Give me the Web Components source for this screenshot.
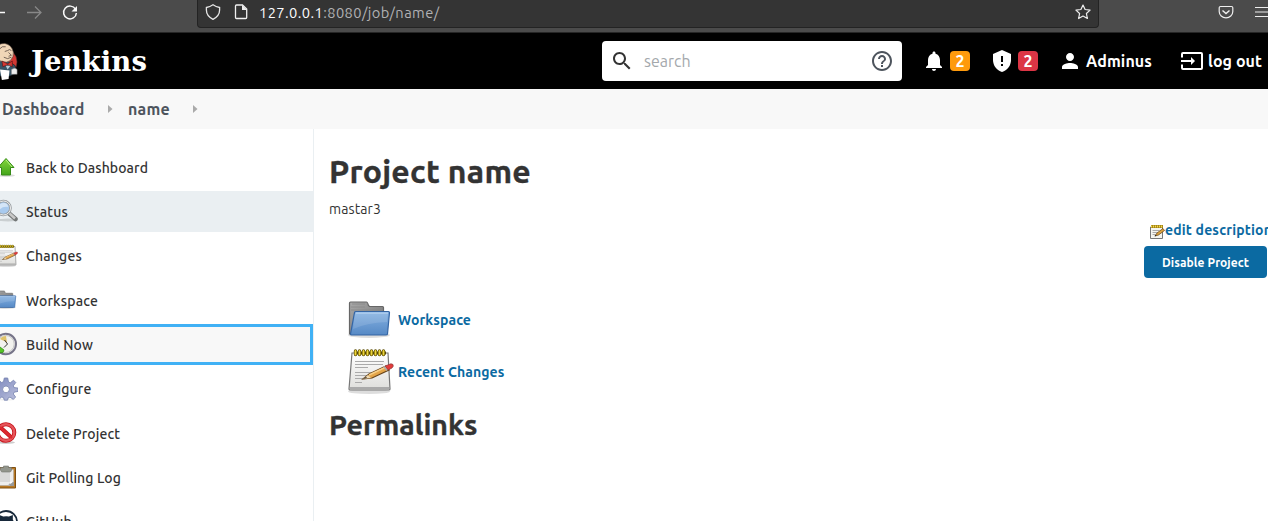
<!DOCTYPE html>
<html lang="en"><head><meta charset="utf-8"><title>name [Jenkins]</title>
<style>
html,body{margin:0;width:100%;height:100%;overflow:hidden;background:#fff;font-family:"Ubuntu","Noto Sans","Open Sans",sans-serif;color:#333}
</style></head><body>
<jenkins-page></jenkins-page>
<script>
const define=(name,html,setup)=>customElements.define(name,class extends HTMLElement{
  connectedCallback(){
    if(this.shadowRoot)return;
    const t=document.createElement('template');t.innerHTML=html;
    this.attachShadow({mode:'open'}).append(t.content.cloneNode(true));
    if(setup)setup(this,this.shadowRoot);
  }
});

const notepad=`<defs><linearGradient id="p" x2="0" y2="1"><stop stop-color="#fff"/><stop offset="1" stop-color="#dededb"/></linearGradient></defs>
<ellipse cx="23" cy="43.500" rx="21" ry="2.5" fill="#0002"/>
<path d="M6 5h36l2 36q0 1-1 1H4q-1 0-1-1z" fill="url(#p)" stroke="#777" stroke-width="1.2"/>
<path d="M4 39h39v2H4z" fill="#aaa"/>
<path d="M9 13.500h29M9 16.500h28M9 19.500h13M9 24.500h21M9 27.500h14M9 30.500h9M9 34.500h7" stroke="#aaa" stroke-width="1"/>
<path d="M8 5h32" stroke="#544600" stroke-width="3"/>
<path d="M9.500 3v3.500M13.500 3v3.500M17.500 3v3.500M21.500 3v3.500M25.500 3v3.500M29.500 3v3.500M33.500 3v3.500M37.500 3v3.500" stroke="#5c4c00" stroke-width="3.400" stroke-linecap="round"/>
<path d="M9.500 3v3.500M13.500 3v3.500M17.500 3v3.500M21.500 3v3.500M25.500 3v3.500M29.500 3v3.500M33.500 3v3.500M37.500 3v3.500" stroke="#edd437" stroke-width="1.900" stroke-linecap="round"/>
<path d="M17 31l6-5 17-8 3 4-17 8z" fill="#e4a548" stroke="#68441a" stroke-width="1.200"/><path d="M23 27l17-8" stroke="#f8cf86" stroke-width="1.500"/>
<path d="M17 31l5-4 3 3z" fill="#efd9b0"/><path d="M17 31l3-2 1 1z" fill="#222"/>
<path d="M39 18l3 4 4-2q2-2 1-3.500-2-1.500-4 0z" fill="#e33b3b" stroke="#8d3a3a" stroke-width=".7"/><path d="M38 18.500l3 4" stroke="#aaa" stroke-width="1.500"/>`;
const folder=`<defs><linearGradient id="b" x2="0" y2="1"><stop stop-color="#86b2e2"/><stop offset="1" stop-color="#5689c5"/></linearGradient><linearGradient id="g" x2="1" y2="1"><stop stop-color="#aaa"/><stop offset="1" stop-color="#6d6d6d"/></linearGradient></defs>
<ellipse cx="23" cy="39" rx="21" ry="3" fill="#0002"/>
<path d="M3.500 38V7q0-1 1-1h16q1 0 2 3.500l1 1h13q1 0 1 1v27z" fill="url(#g)" stroke="#666" stroke-width="1.200"/>
<path d="M6 8h13M5 11h14M5 14h28" stroke="#888" stroke-width=".8"/>
<path d="M8.500 16.500q0-1 1-1h33q1 0 1 1l-2 21.500q0 1-2 1H5.500q-1 0-1-1z" fill="url(#b)" stroke="#3465a4" stroke-width="1.200"/>
<path d="M10 17h32" stroke="#b9d5f4"/><path d="M9 17h33l-1 9Q20 27 7 33z" fill="#fff" opacity=".12"/>`;
const icons={
notepad:[48,notepad],folder:[48,folder],
smallnote:[16,`<path d="M1.500 3h12v11.500h-12z" fill="#f5f5ef" stroke="#777"/><path d="M2 2.500h12" stroke="#9b7a12" stroke-width="3"/><path d="M2 2.500h12" stroke="#f6dc4b" stroke-width="2" stroke-dasharray="1.200 .8"/><path d="M3.500 6.500h7M3.500 8.500h5M3.500 10.500h3" stroke="#aaa"/><path d="M6 12l2-3 6-4.500 1.500 2-6 4.500z" fill="#dda23e" stroke="#5f4015" stroke-width=".7"/><path d="M5.500 12.500l2-.7-1-1z" fill="#222"/>`],
up:[24,`<defs><linearGradient id="u" x2="0" y2="1"><stop stop-color="#83d63b"/><stop offset="1" stop-color="#43a51a"/></linearGradient></defs><ellipse cx="12" cy="20.500" rx="9" ry="1.500" fill="#0002"/><path d="M12 3.500l8 9h-3.500v7.500h-9v-7.500H4z" fill="url(#u)" stroke="#368b16"/><path d="M12 5l6 7" stroke="#baf487" fill="none"/>`],
magnifier:[24,`<ellipse cx="14" cy="21" rx="10" ry="1.500" fill="#0002"/><path d="M14.500 14l7 6" stroke="#747777" stroke-width="4.500" stroke-linecap="round"/><path d="M15 14l6 5.500" stroke="#c8c8c8" stroke-width="2.500"/><circle cx="9.500" cy="9" r="7" fill="#a9caee" stroke="#969b9e" stroke-width="2.600"/><circle cx="9.500" cy="9" r="7" fill="none" stroke="#eee"/><path d="M4.500 9Q5 4 10 4q4 0 4 4Q8 7 4.500 12z" fill="#fff" opacity=".5"/>`],
clock:[24,`<circle cx="11.700" cy="12" r="10.300" fill="#eeeef1" stroke="#767488" stroke-width="2"/><circle cx="11.700" cy="12" r="8.500" fill="#f2f2ee" stroke="#bbb" stroke-width=".8"/><path d="M13 10.500L6 7q2-3 6-3z" fill="#dfc36b"/><path d="M10.500 8l3 4-3.500 3.500" fill="none" stroke="#333" stroke-width="1"/><path d="M2 14l4 1 4 3-1 2.500-7 .5z" fill="#55c427" stroke="#29880d" stroke-width=".7"/>`],
gear:[24,`<defs><linearGradient id="m" x2="1" y2="1"><stop stop-color="#7b87bd"/><stop offset="1" stop-color="#bcc0dc"/></linearGradient></defs><ellipse cx="12" cy="22.500" rx="9" ry="1" fill="#0001"/><path fill="url(#m)" stroke="#7480ad" stroke-width=".8" fill-rule="evenodd" d="M10.300 1h3.400l.8 4 1.800.8 3.200-2.600 2.300 2.300-2.500 3.300.8 1.800 3.900.5v3.300l-3.900.8-.8 1.800 2.300 3-2.300 2.400-3.300-2.300-1.800.8-.7 2.300h-3.200l-.8-2.500-1.700-.7-3.200 2.400L2 19.900l2.300-3.200-.8-1.700-3.500-.7V11l3.700-.6.8-1.800L2.200 5.400l2.300-2.300 3.100 2.400 1.900-.8zM12 9a3.400 3.400 0 1 0 0 6.800A3.400 3.400 0 1 0 12 9z"/>`],
forbid:[24,`<ellipse cx="12" cy="21.500" rx="9" ry="1.500" fill="#0003"/><circle cx="12" cy="11.500" r="8.300" fill="#fff" stroke="#c61018" stroke-width="4"/><path d="M6 6l12 11" stroke="#c61018" stroke-width="4"/><circle cx="12" cy="11.500" r="8.300" fill="none" stroke="#e5555a" stroke-width="2.400"/><path d="M6 6l12 11" stroke="#dc2930" stroke-width="2.500"/>`],
clipboard:[24,`<path d="M1 2.500h20.500V23H1z" fill="#b87924" stroke="#805013"/><path d="M3.500 4.500h16v16h-16z" fill="#eee" stroke="#aaa" stroke-width=".5"/><path d="M6 7h10v10H6z" fill="#d9d9d9"/><path d="M14 21q1-3 6-5v5z" fill="#999"/><path d="M14 21q3-1 2-4l4-1z" fill="#fff"/><path d="M6.500 5V2.500h3V1h5v1.500h3V5q0 2-2 2h-7q-2 0-2-2z" fill="#92958c" stroke="#73766e" stroke-width=".6"/>`],
github:[24,`<circle cx="12" cy="12" r="11" fill="#fff" stroke="#17283a" stroke-width="1.800"/><path d="M5.500 9.500L5.300 5l4 1.500q3-.6 5.600 0l4-1.500-.1 4.500q3 5-2 7.500l-2 .6V23h-6v-5Q3 16 5.500 9.500z" fill="#17283a"/>`],
back:[16,`<path d="M15 7.500H1M7 1.500l-6 6 6 6" fill="none" stroke="#fafafa" stroke-width="1.300"/>`],
forward:[16,`<path d="M1 7.500h14M9 1.500l6 6-6 6" fill="none" stroke="#888" stroke-width="1.300"/>`],
reload:[16,`<path d="M13.500 4.200A6.400 6.400 0 1 0 14.400 8" fill="none" stroke="#fafafa" stroke-width="1.500"/><path d="M15 1v5.500H9.500z" fill="#fafafa"/>`],
shield:[16,`<path d="M8 .8Q11 3 14.600 3.500V6q0 6-6.600 9.300Q1.400 12 1.400 6V3.500Q5 3 8 .8z" fill="none" stroke="#e6e6e6" stroke-width="1.300"/>`],
doc:[16,`<path d="M3.500 1h6L13.700 5v8.500q0 1-1 1h-9.200q-1 0-1-1V2q0-1 1-1z" fill="none" stroke="#f0f0f0" stroke-width="1.300"/><path d="M9 1v5h5z" fill="#eee"/>`],
star:[16,`<path d="M8 1l2.100 4.500 5 .6-3.700 3.400 1 5L8 12l-4.400 2.500 1-5L.9 6.100l5-.6z" fill="none" stroke="#eee" stroke-width="1.200" stroke-linejoin="round"/>`],
pocket:[16,`<path d="M2.500 2.500h11q1.300 0 1.300 1.300V7.500a6.800 6.300 0 0 1-13.600 0V3.800q0-1.300 1.300-1.300z" fill="none" stroke="#eee" stroke-width="1.200"/><path d="M4.500 6.500L8 9.500l3.500-3" fill="none" stroke="#eee" stroke-width="1.500"/>`],
menu:[16,`<path d="M1 3.500h14M1 8h14M1 12.500h14" stroke="#eee" stroke-width="1.200"/>`],
search:[24,`<path fill="#333" d="M15.500 14h-.79l-.28-.27C15.410 12.590 16 11.110 16 9.500 16 5.910 13.090 3 9.500 3S3 5.910 3 9.500 5.910 16 9.500 16c1.610 0 3.090-.59 4.230-1.570l.27.28v.79l5 4.990L20.490 19l-4.990-5zm-6 0C7.010 14 5 11.990 5 9.500S7.010 5 9.500 5 14 7.010 14 9.500 11.990 14 9.500 14z"/>`],
help:[24,`<path fill="#4d545d" d="M11 18h2v-2h-2v2zm1-16C6.480 2 2 6.480 2 12s4.480 10 10 10 10-4.480 10-10S17.520 2 12 2zm0 18c-4.410 0-8-3.590-8-8s3.590-8 8-8 8 3.590 8 8-3.590 8-8 8zm0-14c-2.210 0-4 1.790-4 4h2c0-1.100.9-2 2-2s2 .9 2 2c0 2-3 1.750-3 5h2c0-2.250 3-2.500 3-5 0-2.210-1.790-4-4-4z"/>`],
bell:[24,`<path fill="#fff" d="M12 22c1.100 0 2-.9 2-2h-4c0 1.100.9 2 2 2zm6-6v-5c0-3.070-1.630-5.640-4.500-6.320V4c0-.83-.67-1.500-1.500-1.500s-1.500.67-1.500 1.500v.68C7.640 5.360 6 7.920 6 11v5l-2 2v1h16v-1l-2-2z"/>`],
warn:[24,`<path fill="#fff" d="M12 1L3 5v6c0 5.550 3.840 10.740 9 12 5.160-1.260 9-6.450 9-12V5z"/><path d="M11 7h2v6h-2zM11 15h2v2h-2z" fill="#000"/>`],
person:[24,`<path fill="#fff" d="M12 12c2.210 0 4-1.790 4-4s-1.790-4-4-4-4 1.790-4 4 1.790 4 4 4zm0 2c-2.670 0-8 1.340-8 4v2h16v-2c0-2.660-5.330-4-8-4z"/>`],
exit:[24,`<path fill="none" stroke="#fff" stroke-width="2" d="M2 8.500V5q0-1 1-1h18q1 0 1 1v14q0 1-1 1H3q-1 0-1-1v-3.500"/><path d="M1 12h13" stroke="#fff" stroke-width="2"/><path d="M11 8l4 4-4 4z" fill="#fff"/>`],
arrow:[8,`<path d="M2 0l4.500 4L2 8z" fill="#aaa"/>`],
butler:[40,`<circle cx="23.500" cy="21" r="14.500" fill="#d33833" stroke="#222" stroke-width=".6"/><path d="M10 19q12-2 22 3l4 3 1 8-7 3H10z" fill="#375466" stroke="#111" stroke-width=".6"/><path d="M25 1.500q-8 0-11 6-1 11 8 13 5 2 9-1 4-4 3-9-2-8-9-9z" fill="#f0d6b7" stroke="#5b4b42" stroke-width=".7"/><path d="M20 7q2-3 6-2M28 9q2-2 4 0M25 10l3-1M29 11l3 3-3 1M24 16q4 3 8 0M17 9q-2 2 0 5" fill="none" stroke="#4f413a" stroke-width=".8"/><path d="M22 20l6 3 5-3v6l-5-2-5 2z" fill="#d33833" stroke="#501010" stroke-width=".6"/><path d="M20 29l10 1-1 9-7 1z" fill="#fff"/><path d="M26 25l2 4 3-4z" fill="#b7ccd8"/><path d="M32 29q4-3 6 0v5h-6z" fill="#eee" stroke="#777" stroke-width=".5"/>`]
};
define('ui-icon','<style>:host{display:block;flex:none}svg{display:block;width:100%;height:100%}</style>',(el,root)=>{
  const [box,body]=icons[el.getAttribute('name')],s=el.getAttribute('size')||box;
  el.style.width=el.style.height=s+'px';
  root.innerHTML+=`<svg viewBox="0 0 ${box} ${box}">${body}</svg>`;
});
/* Label set to a given measure by evenly adjusting its tracking. */
define('ui-label','<style>:host{display:block;flex:none;white-space:nowrap}span{display:inline-block}</style><span><slot></slot></span>',(el,root)=>{
  const w=+el.getAttribute('measure'),s=root.querySelector('span');
  if(w){const n=el.textContent.length,now=s.getBoundingClientRect().width;s.style.letterSpacing=(w-now)/n+'px';el.style.width=w+'px'}
});
define('browser-bar',`<style>
:host{display:flex;height:32px;background:#4b4b4b;border-bottom:1px solid #262626;overflow:hidden;align-items:flex-start}
.nav{display:flex;flex:none;gap:20px;width:207px;margin-left:-10px;padding-top:5px;box-sizing:border-box}
.url{flex:none;width:900px;height:27px;background:#343434;border:1px solid #232323;border-top:0;border-radius:0 0 4px 4px;display:flex;align-items:flex-start;font-size:14.670px;line-height:19px;color:#b1b1b3}
.url>*{margin-top:4px}.url ui-label{margin-top:3px}
b{font-weight:400;color:#fbfbfe}.space{flex:1}
</style><div class="nav"><ui-icon name="back"></ui-icon><ui-icon name="forward"></ui-icon><ui-icon name="reload"></ui-icon></div>
<div class="url"><ui-icon name="shield" style="margin-left:7px"></ui-icon><ui-icon name="doc" style="margin-left:12px"></ui-icon><ui-label measure="180.500" style="margin-left:10px"><b>127.0.0.1</b>:8080/job/name/</ui-label><span class="space"></span><ui-icon name="star" style="margin-right:7px"></ui-icon></div>
<ui-icon name="pocket" style="margin:4px 0 0 119px"></ui-icon><ui-icon name="menu" style="margin:4px 0 0 20px"></ui-icon>`);
define('search-box',`<style>:host{display:flex;align-items:center;box-sizing:border-box;width:300px;height:40px;background:#fff;border-radius:4px;padding:0 8px;color:#a4a8ac;font-size:16px;font-weight:400}
ui-label{margin-left:10px}.space{flex:1}</style><ui-icon name="search"></ui-icon><ui-label measure="48"><slot></slot></ui-label><span class="space"></span><ui-icon name="help"></ui-icon>`);
define('count-badge',`<style>:host{display:block;width:20px;height:20px;border-radius:4px;text-align:center;font-weight:700;font-size:16px;line-height:20px;color:#fff;background:var(--tone)}</style><slot></slot>`);
define('page-header',`<style>
:host{display:flex;height:56px;background:#000;color:#fff;align-items:center;overflow:hidden;font-weight:700;font-size:16px}
.brand{display:flex;width:602px;align-items:center}
</style><div class="brand"><ui-icon name="butler" size="38" style="margin-left:-19px"></ui-icon><ui-label measure="116" style="font:bold 27.500px/34px 'DejaVu Serif',serif;margin:-1px 0 0 12px">Jenkins</ui-label></div>
<search-box>search</search-box>
<ui-icon name="bell" style="margin-left:20px"></ui-icon><count-badge style="margin-left:4px;--tone:#fe9a0c">2</count-badge>
<ui-icon name="warn" style="margin-left:20px"></ui-icon><count-badge style="margin-left:4px;--tone:#dc3545">2</count-badge>
<ui-icon name="person" style="margin-left:20px"></ui-icon><ui-label measure="66" style="margin-left:4px">Adminus</ui-label>
<ui-icon name="exit" style="margin-left:28px"></ui-icon><ui-label measure="54" style="margin-left:4px">log out</ui-label>`);
define('bread-crumbs',`<style>:host{display:flex;align-items:center;height:40px;background:#f8f8f8;padding-left:2px;color:#4d545d;font-size:16px;font-weight:700}</style>
<ui-label measure="82.500">Dashboard</ui-label><ui-icon name="arrow" style="margin:0 14px 0 21.500px"></ui-icon><ui-label measure="42">name</ui-label><ui-icon name="arrow" style="margin-left:21px"></ui-icon>`);
define('side-panel',`<style>:host{display:block;width:313px;flex:none;border-right:1px solid #eaeff2;padding-top:17.670px;box-sizing:content-box}
.task{display:flex;align-items:center;height:41px;margin-bottom:3.330px;font-size:14px;font-weight:500}
.task ui-label{padding-top:1px}
.task.active{background:#eaeff2}.task.focus{background:#f8f8f8;box-shadow:inset 0 0 0 3px #40b1f5;margin-left:-10px;padding-left:10px}
ui-icon{margin:0 8px 0 -6px}</style>`,(el,root)=>{
  [['up','Back to Dashboard',122],['magnifier','Status',42,'active'],['notepad','Changes',56],['folder','Workspace',72],['clock','Build Now',67,'focus'],['gear','Configure',65],['forbid','Delete Project',94],['clipboard','Git Polling Log',95],['github','GitHub',46]].forEach(([i,t,w,c])=>{
    const d=document.createElement('div');d.className='task '+(c||'');
    d.innerHTML=`<ui-icon name="${i}" size="24"></ui-icon><ui-label measure="${w}">${t}</ui-label>`;root.append(d);
  });
});
define('project-main',`<style>
:host{display:block;flex:1;min-width:0;padding:21px 0 0 15px;font-size:14px;line-height:20px}
h1,h2{margin:0;color:#333;font-weight:700;-webkit-text-stroke:.35px #333}h1{font-size:32px;line-height:42px}h2{font-size:28.500px;line-height:36px;margin-top:8px}
.desc{margin-top:7px}
.actions{display:flex;flex-direction:column;width:124px;margin-left:auto;color:#0b6aa2;font-weight:700;margin-top:1px}
.edit{display:flex;margin-left:5px;height:26px}.edit ui-icon{margin-top:4px}
.btn{display:flex;justify-content:center;width:123px;height:32px;border-radius:4px;background:#0b6aa2;color:#fff;font-size:12px;line-height:33px}
.links{margin:16px 0 0 17px;color:#0b6aa2;font-weight:700}.row{display:flex;align-items:center;height:52px}.row ui-label{margin-left:4px}.row ui-icon{margin-top:-1px}
</style>
<h1><ui-label measure="202">Project name</ui-label></h1><ui-label class="desc" measure="52">mastar3</ui-label>
<div class="actions"><div class="edit"><ui-icon name="smallnote"></ui-icon><ui-label measure="107">edit description</ui-label></div><div class="btn"><ui-label measure="87">Disable Project</ui-label></div></div>
<div class="links"><div class="row"><ui-icon name="folder"></ui-icon><ui-label measure="73">Workspace</ui-label></div><div class="row"><ui-icon name="notepad"></ui-icon><ui-label measure="106.500">Recent Changes</ui-label></div></div>
<h2><ui-label measure="148.500">Permalinks</ui-label></h2>`);
define('jenkins-page',`<style>:host{display:flex;flex-direction:column;width:100%;height:100%;overflow:hidden}browser-bar,page-header,bread-crumbs{flex:none}.body{display:flex;flex:1;min-height:0;overflow:hidden}</style>
<browser-bar></browser-bar><page-header></page-header><bread-crumbs></bread-crumbs><div class="body"><side-panel></side-panel><project-main></project-main></div>`);
</script></body></html>
